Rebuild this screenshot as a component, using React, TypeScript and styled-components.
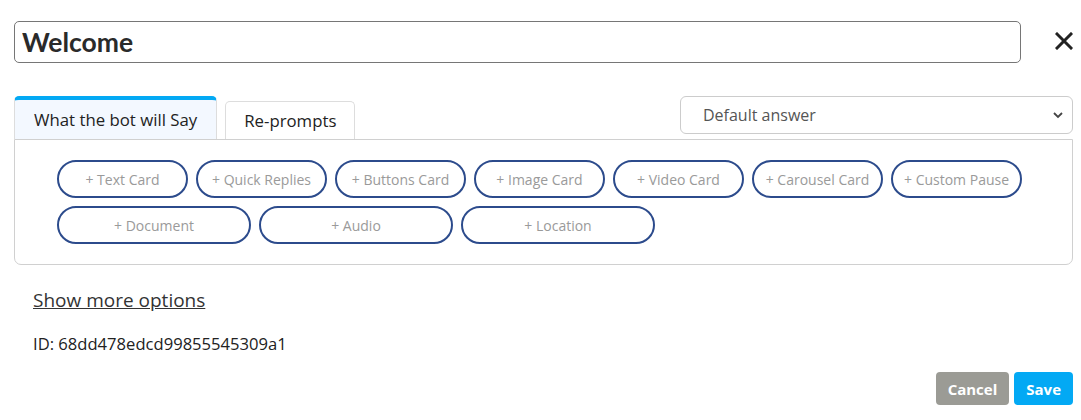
import React from "react";
import styled, { createGlobalStyle } from "styled-components";

const Global = createGlobalStyle`
  html, body { margin: 0; padding: 0; background: #fff; }
  body { font-family: "Open Sans", "Noto Sans", sans-serif; color: #222; }
  * { box-sizing: border-box; }
`;

const Page = styled.div`
  width: 1081px;
  height: 420px;
  padding: 21px 8px 0 14px;
  display: flex;
  flex-direction: column;
`;

const Header = styled.div`
  display: flex;
  align-items: center;
  gap: 34px;
`;

const TitleInput = styled.input`
  flex: 0 0 1007px;
  height: 42px;
  border: 1px solid #767676;
  border-radius: 5px;
  padding: 0 7px;
  font-family: Lato, sans-serif;
  font-weight: 700;
  font-size: 26.5px;
  color: #2a2a2a;
  outline: none;
`;

const CloseButton = styled.button`
  border: 0;
  background: none;
  padding: 0;
  width: 20px;
  height: 20px;
  display: flex;
  align-items: center;
  justify-content: center;
  cursor: pointer;
  margin-top: -2px;
`;

const TabBar = styled.div`
  margin-top: 33px;
  width: 1059px;
  display: flex;
  align-items: flex-end;
  gap: 8px;
`;

const Tab = styled.div<{ $active?: boolean }>`
  height: ${(p) => (p.$active ? 43 : 38)}px;
  padding: 0 ${(p) => (p.$active ? 19 : 18)}px;
  display: flex;
  align-items: center;
  justify-content: center;
  font-size: 16.8px;
  color: #222;
  background: ${(p) => (p.$active ? "#f3f8ff" : "#fff")};
  border: 1px solid #ddd;
  border-bottom: 0;
  border-top: ${(p) => (p.$active ? "4px solid #03a9f4" : "1px solid #ddd")};
  border-radius: 5px 5px 0 0;
`;

const SelectBox = styled.div`
  margin-left: auto;
  align-self: flex-start;
  width: 393px;
  height: 38px;
  border: 1px solid #ccc;
  border-radius: 6px;
  display: flex;
  align-items: center;
  justify-content: space-between;
  padding: 0 8px 0 22px;
  font-size: 16px;
  color: #555;
`;

const Panel = styled.div`
  width: 1059px;
  height: 126px;
  border: 1px solid #d0d0d0;
  border-radius: 0 0 7px 7px;
  padding: 20px 42px;
  display: flex;
  flex-direction: column;
  gap: 8px;
`;

const ChipRow = styled.div`
  display: flex;
  gap: 8px;
`;

const Chip = styled.button<{ $w: number }>`
  width: ${(p) => p.$w}px;
  height: 38px;
  border: 2px solid #2c4b8c;
  border-radius: 20px;
  background: #fff;
  font-family: "Open Sans", sans-serif;
  font-size: 14px;
  color: #9a9a9a;
  padding: 0;
  cursor: pointer;
`;

const MoreLink = styled.a`
  margin-top: 22px;
  margin-left: 19px;
  font-size: 19px;
  color: #333;
  text-decoration: underline;
  align-self: flex-start;
`;

const IdText = styled.div`
  margin-top: 19px;
  margin-left: 19px;
  font-size: 16.6px;
  color: #222;
`;

const Footer = styled.div`
  margin-top: 17px;
  width: 1059px;
  display: flex;
  justify-content: flex-end;
  gap: 5px;
`;

const ActionButton = styled.button<{ $primary?: boolean }>`
  height: 33px;
  padding: 0 12px;
  border: 0;
  border-radius: 4px;
  background: ${(p) => (p.$primary ? "#03a9f4" : "#9b9b95")};
  color: #fff;
  font-family: "Open Sans", sans-serif;
  font-weight: 700;
  font-size: 15px;
  cursor: pointer;
`;

const row1 = ["Text Card", "Quick Replies", "Buttons Card", "Image Card", "Video Card", "Carousel Card", "Custom Pause"];
const row2 = ["Document", "Audio", "Location"];

export default function App() {
  return (
    <>
      <Global />
      <Page>
        <Header>
          <TitleInput defaultValue="Welcome" />
          <CloseButton aria-label="Close">
            <svg width="18" height="18" viewBox="0 0 18 18">
              <path d="M2 2 L16 16 M16 2 L2 16" stroke="#222" strokeWidth="3" strokeLinecap="square" />
            </svg>
          </CloseButton>
        </Header>
        <TabBar>
          <Tab $active>What the bot will Say</Tab>
          <Tab>Re-prompts</Tab>
          <SelectBox>
            <span>Default answer</span>
            <svg width="12" height="8" viewBox="0 0 12 8">
              <path d="M2 2 L6 6 L10 2" stroke="#444" strokeWidth="1.8" fill="none" />
            </svg>
          </SelectBox>
        </TabBar>
        <Panel>
          <ChipRow>
            {row1.map((t) => (
              <Chip key={t} $w={131}>+ {t}</Chip>
            ))}
          </ChipRow>
          <ChipRow>
            {row2.map((t) => (
              <Chip key={t} $w={194}>+ {t}</Chip>
            ))}
          </ChipRow>
        </Panel>
        <MoreLink>Show more options</MoreLink>
        <IdText>ID: 68dd478edcd99855545309a1</IdText>
        <Footer>
          <ActionButton>Cancel</ActionButton>
          <ActionButton $primary>Save</ActionButton>
        </Footer>
      </Page>
    </>
  );
}
